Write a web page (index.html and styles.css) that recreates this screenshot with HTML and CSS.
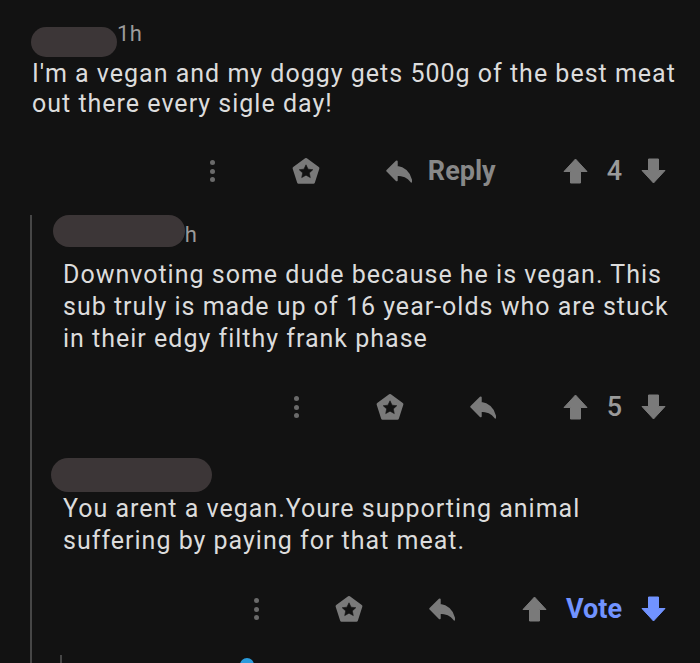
FILE: index.html
```html
<!DOCTYPE html>
<html lang="en">
<head>
<meta charset="utf-8">
<title>Comments</title>
<link rel="stylesheet" href="styles.css">
</head>
<body>
<div class="page">
  <div class="comment c1">
    <div class="meta">
      <span class="blob blob1"></span>
      <span class="time">1h</span>
    </div>
    <p class="text">I'm a vegan and my doggy gets 500g of the best meat out there every sigle day!</p>
    <div class="actions">
      <span class="dots"><i></i><i></i><i></i></span>
      <svg class="award" viewBox="0 0 28 28"><path class="pent" d="M14 2.5 L25.9 11.2 L21.4 25.2 L6.6 25.2 L2.1 11.2 Z"/><path class="star" d="M14 7.8 L16.1 12.2 L20.8 12.7 L17.3 15.9 L18.3 20.6 L14 18.2 L9.7 20.6 L10.7 15.9 L7.2 12.7 L11.9 12.2 Z"/></svg>
      <span class="reply">
        <svg class="reply-icon" viewBox="2 4 19.5 17"><path d="M10 9V5l-7 7 7 7v-4.1c5 0 8.5 1.6 11 5.1-1-5-4-10-11-11z"/></svg>
        <span class="reply-label">Reply</span>
      </span>
      <span class="vote">
        <svg class="arrow" viewBox="0 0 25 26"><path d="M12.5 1 L24 13.5 L17.5 13.5 L17.5 25 L7.5 25 L7.5 13.5 L1 13.5 Z"/></svg>
        <span class="score">4</span>
        <svg class="arrow" viewBox="0 0 25 26"><path d="M12.5 25 L24 12.5 L17.5 12.5 L17.5 1 L7.5 1 L7.5 12.5 L1 12.5 Z"/></svg>
      </span>
    </div>
  </div>

  <div class="thread">
    <div class="comment c2">
      <div class="meta">
        <span class="blob blob2"></span>
        <span class="time time2">1h</span>
      </div>
      <p class="text">Downvoting some dude because he is vegan. This sub truly is made up of 16 year-olds who are stuck in their edgy filthy frank phase</p>
      <div class="actions">
        <span class="dots"><i></i><i></i><i></i></span>
        <svg class="award" viewBox="0 0 28 28"><path class="pent" d="M14 2.5 L25.9 11.2 L21.4 25.2 L6.6 25.2 L2.1 11.2 Z"/><path class="star" d="M14 7.8 L16.1 12.2 L20.8 12.7 L17.3 15.9 L18.3 20.6 L14 18.2 L9.7 20.6 L10.7 15.9 L7.2 12.7 L11.9 12.2 Z"/></svg>
        <span class="reply">
          <svg class="reply-icon" viewBox="2 4 19.5 17"><path d="M10 9V5l-7 7 7 7v-4.1c5 0 8.5 1.6 11 5.1-1-5-4-10-11-11z"/></svg>
        </span>
        <span class="vote">
          <svg class="arrow" viewBox="0 0 25 26"><path d="M12.5 1 L24 13.5 L17.5 13.5 L17.5 25 L7.5 25 L7.5 13.5 L1 13.5 Z"/></svg>
          <span class="score">5</span>
          <svg class="arrow" viewBox="0 0 25 26"><path d="M12.5 25 L24 12.5 L17.5 12.5 L17.5 1 L7.5 1 L7.5 12.5 L1 12.5 Z"/></svg>
        </span>
      </div>
    </div>

    <div class="comment c3">
      <div class="meta">
        <span class="blob blob3"></span>
      </div>
      <p class="text">You arent a vegan.Youre supporting animal suffering by paying for that meat.</p>
      <div class="actions">
        <span class="dots"><i></i><i></i><i></i></span>
        <svg class="award" viewBox="0 0 28 28"><path class="pent" d="M14 2.5 L25.9 11.2 L21.4 25.2 L6.6 25.2 L2.1 11.2 Z"/><path class="star" d="M14 7.8 L16.1 12.2 L20.8 12.7 L17.3 15.9 L18.3 20.6 L14 18.2 L9.7 20.6 L10.7 15.9 L7.2 12.7 L11.9 12.2 Z"/></svg>
        <span class="reply">
          <svg class="reply-icon" viewBox="2 4 19.5 17"><path d="M10 9V5l-7 7 7 7v-4.1c5 0 8.5 1.6 11 5.1-1-5-4-10-11-11z"/></svg>
        </span>
        <span class="vote">
          <svg class="arrow" viewBox="0 0 25 26"><path d="M12.5 1 L24 13.5 L17.5 13.5 L17.5 25 L7.5 25 L7.5 13.5 L1 13.5 Z"/></svg>
          <span class="score score-vote">Vote</span>
          <svg class="arrow arrow-blue" viewBox="0 0 25 26"><path d="M12.5 25 L24 12.5 L17.5 12.5 L17.5 1 L7.5 1 L7.5 12.5 L1 12.5 Z"/></svg>
        </span>
      </div>
      <div class="child">
        <span class="avatar"></span>
      </div>
    </div>
  </div>
</div>
</body>
</html>
```

FILE: styles.css
```css
html, body {
  margin: 0;
  padding: 0;
}
body {
  background: #121212;
  color: #dcdcdc;
  font-family: Roboto, "Noto Sans", "Liberation Sans", sans-serif;
  width: 700px;
  height: 663px;
  overflow: hidden;
}
.page {
  display: flex;
  flex-direction: column;
}
.comment {
  display: flex;
  flex-direction: column;
}
.c1 {
  padding: 23px 0 0 32px;
}
.meta {
  display: flex;
  align-items: flex-start;
}
.blob {
  display: block;
  background: #3c3637;
  position: relative;
  z-index: 1;
}
.blob1 {
  width: 86px;
  height: 30px;
  border-radius: 15px;
  margin: 4px 0 0 -1px;
}
.blob2 {
  width: 132px;
  height: 32px;
  border-radius: 16px;
  margin-left: -10px;
}
.blob3 {
  width: 161px;
  height: 34px;
  border-radius: 17px;
  margin-left: -12px;
}
.time {
  font-size: 22px;
  line-height: 22px;
  color: #9b9b9b;
  letter-spacing: 0.5px;
}
.time2 {
  margin: 9px 0 0 -13px;
}
.text {
  margin: 0;
  font-size: 25px;
  letter-spacing: 1px;
  font-weight: 400;
}
.c1 .text {
  margin-top: 2px;
  line-height: 30px;
  padding-right: 12px;
}
.c2 .text {
  margin-top: 12px;
  line-height: 32px;
  padding-right: 20px;
}
.c3 .meta {
  margin-top: 29px;
}
.c3 .text {
  margin-top: 1px;
  line-height: 32px;
  padding-right: 20px;
}
.actions {
  margin-top: 30px;
  height: 44px;
  display: flex;
  align-items: center;
  justify-content: flex-end;
  padding-right: 34px;
  color: #7e7e7e;
}
.dots {
  display: flex;
  flex-direction: column;
  gap: 3.5px;
  width: 6px;
  align-items: center;
  margin-right: 76px;
}
.dots i {
  display: block;
  width: 5px;
  height: 5px;
  border-radius: 50%;
  background: #6a6a6a;
}
.award {
  width: 28px;
  height: 28px;
  margin-right: 66px;
}
.award .pent {
  fill: #7a7a7a;
  stroke: #7a7a7a;
  stroke-width: 3;
  stroke-linejoin: round;
}
.award .star {
  fill: #121212;
  stroke: #121212;
  stroke-width: 0.6;
  stroke-linejoin: round;
}
.reply {
  display: flex;
  align-items: center;
  gap: 16px;
  margin-right: 67px;
}
.reply-icon {
  width: 26px;
  height: 23px;
  fill: #7a7a7a;
  stroke: #7a7a7a;
  stroke-width: 1.6;
  stroke-linejoin: round;
}
.reply-label {
  font-size: 27px;
  font-weight: 700;
  color: #888888;
  line-height: 32px;
}
.vote {
  display: flex;
  align-items: center;
  gap: 19px;
}
.arrow {
  width: 25px;
  height: 26px;
  fill: #7a7a7a;
  stroke: #7a7a7a;
  stroke-width: 1;
  stroke-linejoin: round;
}
.arrow-blue {
  fill: #7193ff;
  stroke: #7193ff;
}
.score {
  font-size: 27px;
  font-weight: 500;
  color: #9a9a9a;
  line-height: 32px;
}
.score-vote {
  font-weight: 700;
  color: #7193ff;
}
.thread {
  margin: 22px 0 0 30px;
  border-left: 2px solid #464646;
  padding-left: 31px;
  display: flex;
  flex-direction: column;
}
.child {
  margin: 24px 0 0 -3px;
  border-left: 2px solid #464646;
  height: 40px;
  display: flex;
  align-items: flex-start;
}
.avatar {
  display: block;
  width: 14px;
  height: 14px;
  border-radius: 50%;
  background: #2a9bdc;
  margin: 3px 0 0 178px;
}
```
